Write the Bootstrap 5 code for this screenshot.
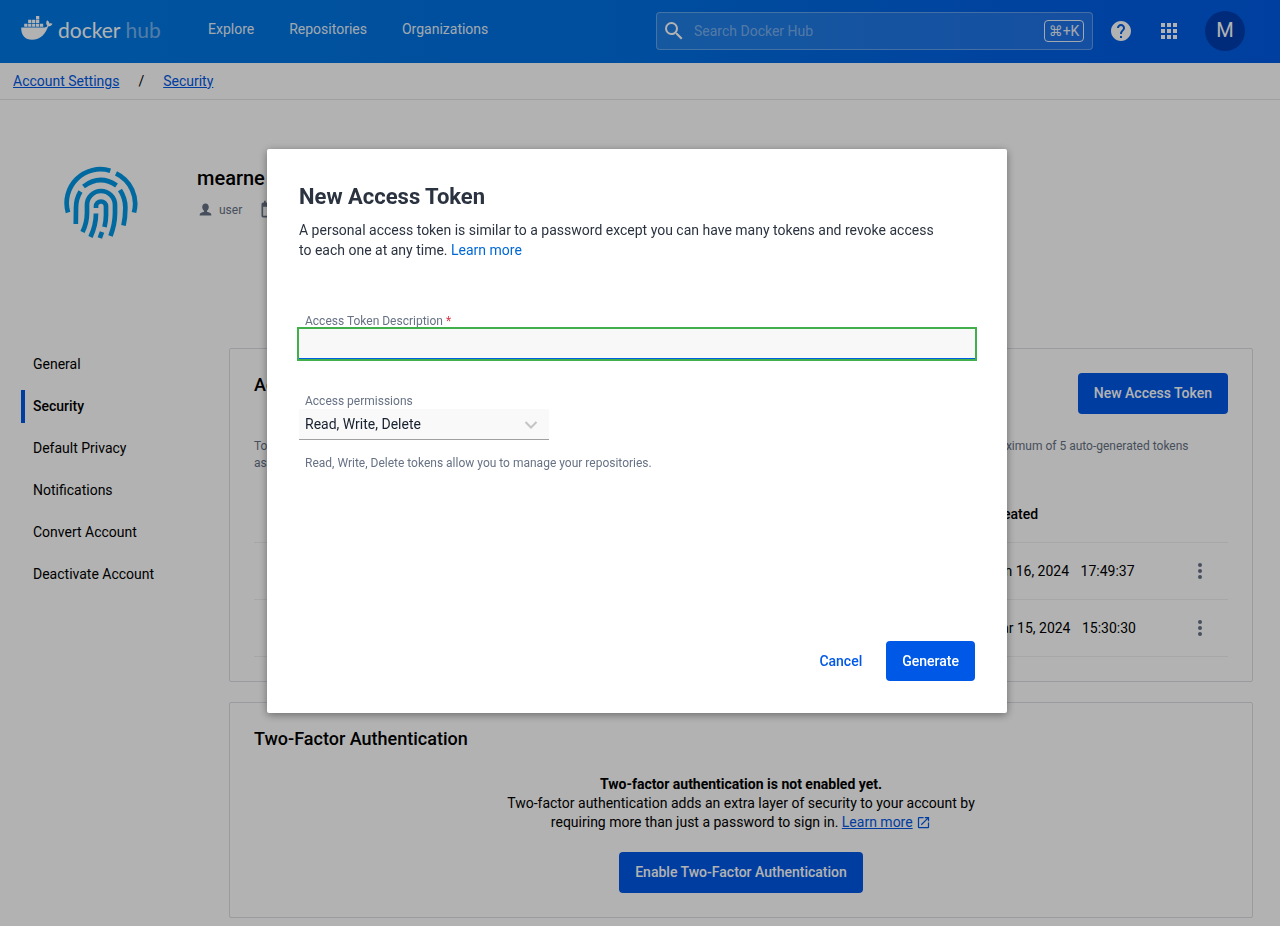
<!DOCTYPE html>
<html lang="en">
<head>
<meta charset="utf-8">
<meta name="viewport" content="width=device-width, initial-scale=1">
<title>Security | Docker Hub</title>
<link href="https://cdn.jsdelivr.net/npm/bootstrap@5.3.0/dist/css/bootstrap.min.css" rel="stylesheet">
<style>
:root { --hub-blue: #0058e6; --hub-muted: #677285; --hub-line: #dcdee3; }
body { font-family: Roboto, "Liberation Sans", sans-serif; font-size: 14px; line-height: 19px; color: #000; background: #fff; }
a { color: var(--hub-blue); }

/* top bar */
.hub-bar { min-height: 63px; padding: 0 35px 2px 20px; background: linear-gradient(90deg, #0079e4 0%, #006fe2 50%, #0060e4 80%, #005be4 100%); }
.hub-brand { width: 172px; padding-bottom: 5px; color: #fff; font-family: Lato, sans-serif; font-size: 21px; line-height: 20px; gap: 5px; }
.hub-brand span span { opacity: .45; margin-left: 5px; }
.hub-nav { gap: 35px; padding-bottom: 3px; }
.hub-nav a { color: #fff; opacity: .9; }
.hub-search { width: 437px; height: 38px; border: 1px solid rgba(255,255,255,.3); border-radius: 4px; background: rgba(255,255,255,.12); padding: 0 8px 0 5px; }
.hub-search input { min-width: 0; height: 30px; border: 0; background: none; color: #fff; outline: 0; }
.hub-search input::placeholder { color: rgba(255,255,255,.4); opacity: 1; }
.hub-key { width: 40px; height: 22px; border: 1px solid #fff; border-radius: 4px; background: none; color: #fff; font: 14px/20px Roboto, "DejaVu Sans", sans-serif; padding: 0; text-align: center; opacity: .9; }
.icon-plain { border: 0; background: none; padding: 0; color: #fff; line-height: 0; }
.hub-avatar { width: 40px; height: 40px; border: 0; border-radius: 50%; background: #003eb1; color: #fff; font-size: 20px; padding: 0; }

/* breadcrumb and profile */
.crumbs { min-height: 37px; padding: 0 13px; border-bottom: 1px solid #e6e6e6; gap: 19px; }
.profile { padding: 66px 64px 108px; gap: 59px; }
.profile h1 { font-size: 20px; line-height: 24px; font-weight: 500; margin: 0 0 10px; }
.profile-meta { color: var(--hub-muted); font-size: 12px; line-height: 16px; gap: 6px; }
.profile-meta .joined { margin-left: 11px; }

/* settings */
.settings { padding: 0 27px 8px 21px; }
.side-menu { width: 208px; gap: 9px; }
.side-menu a { height: 33px; padding-left: 8px; border-left: 4px solid transparent; color: #000; line-height: 33px; text-decoration: none; }
.side-menu a.active { border-color: var(--hub-blue); font-weight: 500; }
.panel { border: 1px solid var(--hub-line); border-radius: 2px; padding: 24px; margin-bottom: 20px; }
.panel h2 { font-size: 18px; line-height: 24px; font-weight: 500; margin: 0; }
.btn-hub { background: var(--hub-blue); color: #fff; border: 0; border-radius: 4px; font-size: 14px; font-weight: 500; line-height: 20px; padding: 10px 16px 11px; }
.btn-hub:hover { background: #004ac4; color: #fff; }
.note { color: var(--hub-muted); font-size: 12px; line-height: 17px; margin: 24px 0 13px; }
.token-table { table-layout: fixed; margin: 0; font-size: 14px; }
.token-table th, .token-table td { height: 57px; padding: 2px 0 0; border-bottom: 1px solid #efefef; vertical-align: middle; color: #000; }
.token-table th { font-weight: 500; }
.token-table td:last-child { text-align: center; padding-top: 0; }
.token-table .icon-plain { color: var(--hub-muted); }
.token-table time { margin-right: 8px; }
.two-factor .btn-hub { margin-top: 20px; }

/* dialog */
.modal-backdrop.show { opacity: .3; }
.token-modal { padding-right: 6px !important; }
.token-modal .modal-dialog { max-width: 740px; margin-top: 149px; }
.token-modal .modal-content { border: 0; border-radius: 2px; padding: 32px; color: #2b3340; box-shadow: 0 2px 8px rgba(0,0,0,.4); }
.token-modal h2 { font-size: 22px; line-height: 32px; font-weight: 700; margin: 0 0 7px; }
.lead-text { line-height: 20px; margin: 0 0 53px; }
.lead-text a { color: #0068d6; text-decoration: none; }
.field-label { display: block; padding-left: 6px; color: var(--hub-muted); font-size: 12px; line-height: 16px; }
.token-input { height: 30px; border: 0; border-bottom: 1px solid #0062e0; background: #f8f8f8; padding: 0 6px; margin-bottom: 34px; outline: 2px solid #42b04a; }
.token-select { width: 250px; margin-bottom: 15px; }
.token-select select { width: 100%; height: 31px; appearance: none; border: 0; border-bottom: 1px solid #a0a0a0; background: #f9f9f9; padding: 0 30px 0 6px; color: #17202e; }
.token-select svg { position: absolute; right: 11px; top: 11px; pointer-events: none; }
.modal-actions { margin-top: 170px; gap: 8px; }
.btn-quiet { border: 0; background: none; color: var(--hub-blue); font-size: 14px; font-weight: 500; line-height: 20px; padding: 10px 16px; }
.modal-actions .btn-hub { padding-bottom: 10px; }
</style>
</head>
<body>
<header class="hub-bar d-flex align-items-center">
  <a href="#" class="hub-brand d-flex align-items-end text-decoration-none me-3" aria-label="Docker Hub">
    <svg width="33" height="24" viewBox="0 1.800 33 24.400" fill="currentColor" aria-hidden="true">
      <path d="M1 13.500h23.500c1.600 0 2.600-.5 3-1.700-1.500-1.700-1.400-3.900-.2-5.600 1.600 1.100 2.200 2.200 2.200 3.300 1.200-.4 2.600-.2 3.300.3-.7 1.700-2.400 2.700-4.500 2.700C25.500 20 20.500 26 12 26 5 26 .6 21.500 1 13.500z"/>
      <path d="M4 9.600h3.300v3.200H4zM8 9.600h3.300v3.200H8zM12 9.600h3.300v3.200H12zM16 9.600h3.300v3.200H16zM20 9.600h3.300v3.200H20zM8 5.700h3.300v3.200H8zM12 5.700h3.300v3.200H12zM16 5.700h3.300v3.200H16zM16 1.800h3.300V5H16z"/>
    </svg>
    <span>docker<span>hub</span></span>
  </a>
  <nav class="hub-nav d-flex" aria-label="Main">
    <a class="text-decoration-none" href="#">Explore</a>
    <a class="text-decoration-none" href="#">Repositories</a>
    <a class="text-decoration-none" href="#">Organizations</a>
  </nav>
  <form class="hub-search d-flex align-items-center ms-auto" role="search">
    <svg width="24" height="24" viewBox="0 0 24 24" fill="#fff" class="flex-shrink-0" aria-hidden="true"><path d="M15.500 14h-.79l-.28-.27A6.471 6.471 0 0 0 16 9.500 6.500 6.500 0 1 0 9.500 16c1.610 0 3.090-.59 4.230-1.570l.27.28v.79l5 4.990L20.490 19l-4.990-5zm-6 0C7.010 14 5 11.990 5 9.500S7.010 5 9.500 5 14 7.010 14 9.500 11.990 14 9.500 14z"/></svg>
    <input class="flex-grow-1 ms-1 ps-1" type="text" placeholder="Search Docker Hub" aria-label="Search Docker Hub">
    <kbd class="hub-key">⌘+K</kbd>
  </form>
  <button class="icon-plain ms-3" type="button" aria-label="Help"><svg width="24" height="24" viewBox="0 0 24 24" fill="currentColor"><path d="M12 2C6.480 2 2 6.480 2 12s4.480 10 10 10 10-4.480 10-10S17.520 2 12 2zm1 17h-2v-2h2v2zm2.070-7.750-.9.920C13.450 12.900 13 13.500 13 15h-2v-.5c0-1.100.45-2.100 1.170-2.830l1.240-1.260c.37-.36.59-.86.59-1.410 0-1.100-.9-2-2-2s-2 .9-2 2H8c0-2.210 1.790-4 4-4s4 1.790 4 4c0 .88-.36 1.680-.93 2.250z"/></svg></button>
  <button class="icon-plain mx-4" type="button" aria-label="Apps"><svg width="24" height="24" viewBox="0 0 24 24" fill="currentColor"><path d="M4 8h4V4H4v4zm6 12h4v-4h-4v4zm-6 0h4v-4H4v4zm0-6h4v-4H4v4zm6 0h4v-4h-4v4zm6-10v4h4V4h-4zm-6 4h4V4h-4v4zm6 6h4v-4h-4v4zm0 6h4v-4h-4v4z"/></svg></button>
  <button class="hub-avatar" type="button">M</button>
</header>

<nav class="crumbs d-flex align-items-center" aria-label="Breadcrumb">
  <a href="#">Account Settings</a><span>/</span><a href="#">Security</a>
</nav>

<section class="profile d-flex">
  <svg width="74" height="74" viewBox="-1 -1 74 74" fill="none" stroke="#0098e6" stroke-width="4.700" class="flex-shrink-0" aria-hidden="true">
    <path d="M3 45.500A33.800 33.800 0 0 1 45.300 3.700M51 6.300A33.800 33.800 0 0 1 69 45.500M18.500 19.500Q35 7 51.500 18.500M15.500 24.500Q10.800 32 11 42L10.800 57M55 23Q60.800 32 60.300 42 60.300 51 58.500 58.500M17.500 65Q22 56 22 46V38A14 14 0 0 1 50 38V46Q50 57 45.500 69M31 41V39.500A5 5 0 0 1 41 39.500V48Q41 54 39.500 60M31 46.500Q31 58 25.500 70M37 65L34.800 71"/>
  </svg>
  <div>
    <h1>mearne</h1>
    <div class="profile-meta d-flex align-items-center">
      <svg width="16" height="16" viewBox="0 0 16 16" fill="currentColor" aria-hidden="true"><path d="M8.500 1.500c2 0 3.300 1.500 3.300 3.600 0 1.500-.8 3-1.800 3.700v1c1.900.5 4.300 1.100 4.300 2.700v1H2.700v-1c0-1.600 2.400-2.200 4.300-2.700v-1C6 8.100 5.200 6.600 5.200 5.100c0-2.100 1.300-3.600 3.300-3.600z"/></svg>
      <span>user</span>
      <svg width="20" height="20" viewBox="0 0 24 24" fill="currentColor" class="joined" aria-hidden="true"><path d="M19 3h-1V1h-2v2H8V1H6v2H5c-1.110 0-2 .9-2 2v14c0 1.100.89 2 2 2h14c1.100 0 2-.9 2-2V5c0-1.100-.9-2-2-2zm0 16H5V8h14v11z"/></svg>
    </div>
  </div>
</section>

<main class="settings d-flex">
  <nav class="side-menu d-flex flex-column flex-shrink-0" aria-label="Settings">
    <a href="#">General</a>
    <a href="#" class="active" aria-current="page">Security</a>
    <a href="#">Default Privacy</a>
    <a href="#">Notifications</a>
    <a href="#">Convert Account</a>
    <a href="#">Deactivate Account</a>
  </nav>
  <div class="flex-grow-1">
    <section class="panel">
      <div class="d-flex justify-content-between">
        <h2>Access Tokens</h2>
        <button class="btn btn-hub" type="button">New Access Token</button>
      </div>
      <p class="note">Tokens are created for you when you sign in from Docker Desktop and from command line. You can view all of them here and keep up to a maximum of 5 auto-generated tokens<br>associated.</p>
      <table class="table token-table">
        <colgroup><col style="width:56px"><col><col><col><col style="width:183px"><col style="width:56px"></colgroup>
        <thead><tr><th></th><th>Description</th><th>Scope</th><th>Last Used</th><th>Created</th><th></th></tr></thead>
        <tbody>
          <tr><td></td><td>laptop</td><td>All</td><td>Never</td><td><time>Jun 16, 2024</time> 17:49:37</td><td><button class="icon-plain" type="button" aria-label="More"><svg width="24" height="24" viewBox="0 0 24 24" fill="currentColor"><path d="M12 8a2 2 0 1 0 0-4 2 2 0 0 0 0 4zm0 2a2 2 0 1 0 0 4 2 2 0 0 0 0-4zm0 6a2 2 0 1 0 0 4 2 2 0 0 0 0-4z"/></svg></button></td></tr>
          <tr><td></td><td>desktop</td><td>All</td><td>Never</td><td><time>Mar 15, 2024</time> 15:30:30</td><td><button class="icon-plain" type="button" aria-label="More"><svg width="24" height="24" viewBox="0 0 24 24" fill="currentColor"><path d="M12 8a2 2 0 1 0 0-4 2 2 0 0 0 0 4zm0 2a2 2 0 1 0 0 4 2 2 0 0 0 0-4zm0 6a2 2 0 1 0 0 4 2 2 0 0 0 0-4z"/></svg></button></td></tr>
        </tbody>
      </table>
    </section>
    <section class="panel mb-0">
      <h2>Two-Factor Authentication</h2>
      <div class="two-factor text-center mt-4">
        <div class="fw-bold">Two-factor authentication is not enabled yet.</div>
        <div>Two-factor authentication adds an extra layer of security to your account by<br>requiring more than just a password to sign in. <a href="#">Learn more</a>
          <svg width="15" height="15" viewBox="0 0 24 24" fill="#0058e6" aria-hidden="true"><path d="M19 19H5V5h7V3H5a2 2 0 0 0-2 2v14a2 2 0 0 0 2 2h14c1.100 0 2-.9 2-2v-7h-2v7zM14 3v2h3.590l-9.830 9.830 1.410 1.410L19 6.410V10h2V3h-7z"/></svg>
        </div>
        <button class="btn btn-hub" type="button">Enable Two-Factor Authentication</button>
      </div>
    </section>
  </div>
</main>

<div class="modal-backdrop show"></div>
<div class="modal token-modal show d-block" role="dialog" aria-modal="true" aria-labelledby="token-title">
  <div class="modal-dialog">
    <form class="modal-content">
      <h2 id="token-title">New Access Token</h2>
      <p class="lead-text">A personal access token is similar to a password except you can have many tokens and revoke access<br>to each one at any time. <a href="#">Learn more</a></p>
      <label class="field-label" for="token-desc">Access Token Description <span class="text-danger">*</span></label>
      <input class="token-input w-100" id="token-desc" type="text">
      <label class="field-label" for="token-scope">Access permissions</label>
      <div class="token-select position-relative">
        <select id="token-scope"><option>Read, Write, Delete</option><option>Read, Write</option><option>Read-only</option></select>
        <svg width="14" height="10" viewBox="0 0 14 10" fill="none" stroke="#c4c4c4" stroke-width="2" aria-hidden="true"><path d="M1.500 2 7 7.500 12.500 2"/></svg>
      </div>
      <div class="field-label">Read, Write, Delete tokens allow you to manage your repositories.</div>
      <div class="modal-actions d-flex justify-content-end">
        <button class="btn-quiet" type="button">Cancel</button>
        <button class="btn btn-hub" type="submit">Generate</button>
      </div>
    </form>
  </div>
</div>
<script src="https://cdn.jsdelivr.net/npm/bootstrap@5.3.0/dist/js/bootstrap.bundle.min.js"></script>
</body>
</html>
